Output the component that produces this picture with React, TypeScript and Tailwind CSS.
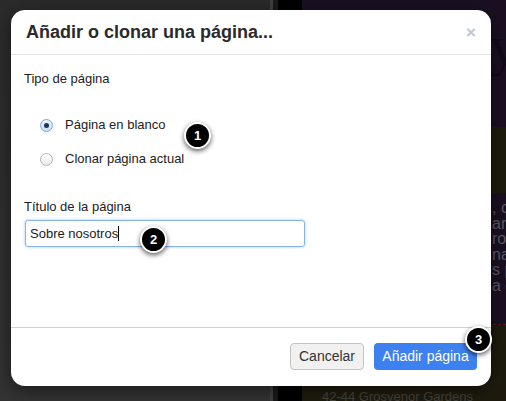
import { useState } from "react";

type Choice = "blank" | "clone";

const font = "font-['Liberation_Sans','Helvetica_Neue',Arial,sans-serif]";

function StepBadge({ n, className }: { n: number; className: string }) {
  return (
    <span
      className={`absolute flex h-[27px] w-[27px] items-center justify-center rounded-full border-2 border-white bg-black text-[13px] font-bold text-white shadow-[0_2px_5px_rgba(0,0,0,0.65)] ${className}`}
    >
      {n}
    </span>
  );
}

function Radio({ checked, label, onSelect }: { checked: boolean; label: string; onSelect: () => void }) {
  return (
    <label className="flex h-[20px] cursor-pointer items-center gap-[12px] pl-[16px]" onClick={onSelect}>
      <span
        className={`flex h-[13px] w-[13px] items-center justify-center rounded-full border ${
          checked
            ? "border-[#7aa7de] bg-gradient-to-b from-[#eaf3fe] to-[#c7ddf7]"
            : "border-[#b4b4b4] bg-gradient-to-b from-white to-[#e9e9e9]"
        }`}
      >
        {checked ? <span className="h-[5px] w-[5px] rounded-full bg-[#1f3550]" /> : null}
      </span>
      <span className="text-[13px] text-[#222]">{label}</span>
    </label>
  );
}

function Backdrop() {
  return (
    <div className="absolute inset-0 flex">
      <div className="w-[270px] bg-gradient-to-b from-[#2b2b2b] to-[#333333]" />
      <div className="w-[3px] bg-[#404040]" />
      <div className="w-[5px] bg-[#1a1a1a]" />
      <div className="w-[24px] bg-black" />
      <div className="flex flex-1 flex-col">
        <div className="relative h-[127px] overflow-hidden bg-[#1a1022]">
          <span className="absolute left-[188px] top-[18px] font-['Liberation_Serif',serif] text-[56px] leading-none text-[#120a18]">
            y
          </span>
        </div>
        <div className="h-[66px] bg-[#1e1b0e]" />
        <div className="relative h-[132px] overflow-hidden border-b border-dashed border-[#5a1a1a] bg-[#1a1022]">
          <div className={`absolute left-[190px] top-[7px] text-[16px] leading-[15.5px] text-[#5e5a66] ${font}`}>
            <p>, c</p>
            <p>are</p>
            <p>ros</p>
            <p>nar</p>
            <p>s p</p>
            <p>a q</p>
          </div>
        </div>
        <div className="relative flex-1 bg-[#1e1b0e]">
          <p className={`absolute left-[20px] top-[63px] text-[13px] leading-[18px] text-[#45433c] ${font}`}>
            42-44 Grosvenor Gardens
          </p>
        </div>
      </div>
    </div>
  );
}

export default function App() {
  const [choice, setChoice] = useState<Choice>("blank");
  const title = "Sobre nosotros";

  return (
    <div className={`relative h-[401px] w-[506px] overflow-hidden ${font}`}>
      <Backdrop />

      <div className="absolute left-[11px] top-[10px] flex h-[376px] w-[480px] flex-col rounded-[14px] bg-white shadow-[0_4px_18px_rgba(0,0,0,0.5)]">
        <div className="flex h-[45px] items-center justify-between border-b border-[#e5e5e5] pl-[15px] pr-[15px]">
          <h2 className="text-[18px] font-bold text-[#2a2a2a]">Añadir o clonar una página...</h2>
          <button type="button" className="text-[17px] font-bold leading-none text-[#c4c4c4]">
            ×
          </button>
        </div>

        <div className="flex-1 px-[13px] pt-[16px]">
          <p className="text-[13px] leading-[16px] text-[#222]">Tipo de página</p>
          <div className="mt-[28px] flex flex-col gap-[14px]">
            <Radio checked={choice === "blank"} label="Página en blanco" onSelect={() => setChoice("blank")} />
            <Radio checked={choice === "clone"} label="Clonar página actual" onSelect={() => setChoice("clone")} />
          </div>
          <p className="mt-[30px] text-[13px] leading-[16px] text-[#222]">Título de la página</p>
          {/* focused text field with the caret right after the value */}
          <div className="ml-[1px] mt-[5px] flex h-[27px] w-[280px] items-center rounded-[3px] border border-[#84b5ea] px-[4px] shadow-[0_0_3px_rgba(100,160,230,0.6)]">
            <span className="text-[13px] text-[#222]">{title}</span>
            <span className="h-[15px] w-px bg-black" />
          </div>
        </div>

        <div className="flex h-[59px] justify-end gap-[10px] border-t border-[#d2d2d2] pr-[14px] pt-[15px]">
          <button
            type="button"
            className="h-[27px] w-[74px] rounded-[4px] border border-[#c4c4c4] bg-[#f1f1f1] text-[14px] text-[#333]"
          >
            Cancelar
          </button>
          <button type="button" className="h-[27px] w-[103px] rounded-[4px] bg-[#3d80ef] text-[14px] text-white">
            Añadir página
          </button>
        </div>
      </div>

      <StepBadge n={1} className="left-[184px] top-[122px]" />
      <StepBadge n={2} className="left-[140px] top-[226px]" />
      <StepBadge n={3} className="left-[465px] top-[326px]" />
    </div>
  );
}
